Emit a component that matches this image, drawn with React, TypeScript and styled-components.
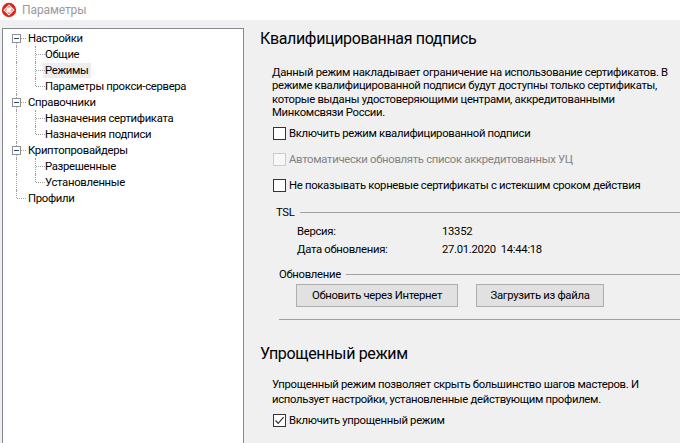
import React from "react";
import styled, { createGlobalStyle } from "styled-components";

const GlobalStyle = createGlobalStyle`
  html, body {
    margin: 0;
    padding: 0;
  }
  body {
    font-family: Roboto, "Liberation Sans", sans-serif;
    font-size: 11.3px;
    letter-spacing: -0.3px;
    color: #000;
    background: #f0f0f0;
  }
`;

const Window = styled.div`
  width: 680px;
  height: 443px;
  overflow: hidden;
  background: #f0f0f0;
  display: flex;
  flex-direction: column;
`;

const TitleBar = styled.div`
  height: 20px;
  flex: none;
  background: #fff;
  display: flex;
  align-items: center;
  gap: 5px;
  padding-left: 1px;
`;

const TitleText = styled.span`
  font-size: 12px;
  letter-spacing: -0.1px;
  color: #9a9a9a;
  line-height: 16px;
`;

const Body = styled.div`
  flex: 1;
  display: flex;
  padding: 8px 0 0 2px;
  min-height: 0;
`;

const TreePanel = styled.div`
  width: 242px;
  flex: none;
  box-sizing: border-box;
  background: #fff;
  border: 1px solid #828790;
  border-bottom: none;
  padding-top: 1px;
`;

const TreeRow = styled.div<{ $level: number }>`
  position: relative;
  height: 16px;
  display: flex;
  align-items: center;
  padding-left: ${(p) => (p.$level === 0 ? 23 : 40)}px;
  white-space: nowrap;
`;

const TreeLabel = styled.span<{ $selected?: boolean }>`
  padding: 0 2px;
  line-height: 15px;
  background: ${(p) => (p.$selected ? "#ededed" : "transparent")};
`;

const VGuide = styled.span<{ $x: number; $top: number; $height: number }>`
  position: absolute;
  left: ${(p) => p.$x}px;
  top: ${(p) => p.$top}px;
  height: ${(p) => p.$height}px;
  border-left: 1px dotted #a0a0a0;
`;

const HGuide = styled.span<{ $x: number; $width: number }>`
  position: absolute;
  left: ${(p) => p.$x}px;
  top: 8px;
  width: ${(p) => p.$width}px;
  border-top: 1px dotted #a0a0a0;
`;

const Expander = styled.span`
  position: absolute;
  left: 9px;
  top: 4px;
  width: 9px;
  height: 9px;
  box-sizing: border-box;
  border: 1px solid #919191;
  background: #fff;
  z-index: 1;
  &::after {
    content: "";
    position: absolute;
    left: 1px;
    top: 3px;
    width: 5px;
    height: 1px;
    background: #2d4b7a;
  }
`;

const Content = styled.div`
  flex: 1;
  padding: 0 0 0 16px;
  min-width: 0;
`;

const SectionTitle = styled.h2<{ $gap?: number }>`
  margin: ${(p) => p.$gap ?? 0}px 0 0;
  font-size: 16px;
  letter-spacing: -0.35px;
  font-weight: 400;
  line-height: 21px;
  white-space: nowrap;
`;

const Description = styled.p<{ $gap: number; $lh: number }>`
  margin: ${(p) => p.$gap}px 0 0 12px;
  line-height: ${(p) => p.$lh}px;
  white-space: nowrap;
`;

const Checks = styled.div<{ $gap: number }>`
  display: flex;
  flex-direction: column;
  gap: 8px;
  margin: ${(p) => p.$gap}px 0 0 13px;
`;

const CheckRow = styled.label<{ $disabled?: boolean }>`
  display: flex;
  align-items: center;
  gap: 3px;
  height: 18px;
  white-space: nowrap;
  color: ${(p) => (p.$disabled ? "#838383" : "#000")};
`;

const CheckBox = styled.span<{ $disabled?: boolean }>`
  width: 13px;
  height: 13px;
  flex: none;
  box-sizing: border-box;
  border: 1px solid ${(p) => (p.$disabled ? "#cccccc" : "#333")};
  background: ${(p) => (p.$disabled ? "#f7f7f7" : "#fff")};
  display: flex;
  align-items: center;
  justify-content: center;
`;

const GroupHeader = styled.div<{ $indent: number; $gap: number }>`
  display: flex;
  align-items: center;
  gap: 5px;
  height: 16px;
  margin: ${(p) => p.$gap}px 0 0 ${(p) => p.$indent}px;
  white-space: nowrap;
  &::after {
    content: "";
    flex: 1;
    border-top: 1px solid #a0a0a0;
  }
`;

const Separator = styled.div`
  margin: 12px 0 0 19px;
  border-top: 1px solid #a0a0a0;
`;

const InfoGrid = styled.div`
  display: grid;
  grid-template-columns: 145px auto;
  grid-auto-rows: 18px;
  align-items: center;
  margin: 2px 0 0 37px;
  white-space: pre;
`;

const Buttons = styled.div`
  display: flex;
  gap: 18px;
  margin: 2px 0 0 36px;
`;

const Button = styled.button<{ $width: number }>`
  width: ${(p) => p.$width}px;
  height: 23px;
  padding: 0;
  font: inherit;
  letter-spacing: inherit;
  color: #000;
  background: #e1e1e1;
  border: 1px solid #adadad;
  border-radius: 0;
`;

const Logo = () => (
  <svg width="16" height="16" viewBox="0 0 16 16">
    <circle cx="8" cy="8" r="7.2" fill="#d8291f" />
    <g fill="none" stroke="#fff" strokeWidth="1.1">
      <path d="M8 3.2 L12.8 8 L8 12.8 L3.2 8 Z" />
      <path d="M8 5.6 L10.4 8 L8 10.4 L5.6 8 Z" />
      <path d="M5.6 5.6 L10.4 10.4 M10.4 5.6 L5.6 10.4" />
    </g>
  </svg>
);

const Check = () => (
  <svg width="11" height="11" viewBox="0 0 11 11">
    <path d="M1.5 5.5 L4.2 8.3 L9.6 2.2" fill="none" stroke="#333" strokeWidth="1.2" />
  </svg>
);

type Node = { label: string; level: number; expander?: boolean; last?: boolean; first?: boolean; selected?: boolean };

const tree: Node[] = [
  { label: "Настройки", level: 0, expander: true, first: true },
  { label: "Общие", level: 1 },
  { label: "Режимы", level: 1, selected: true },
  { label: "Параметры прокси-сервера", level: 1, last: true },
  { label: "Справочники", level: 0, expander: true },
  { label: "Назначения сертификата", level: 1 },
  { label: "Назначения подписи", level: 1, last: true },
  { label: "Криптопровайдеры", level: 0, expander: true },
  { label: "Разрешенные", level: 1 },
  { label: "Установленные", level: 1, last: true },
  { label: "Профили", level: 0, last: true },
];

const TreeItem = ({ node }: { node: Node }) => {
  if (node.level === 0) {
    const top = node.first ? 8 : 0;
    const bottom = node.last ? 8 : 16;
    return (
      <TreeRow $level={0}>
        <VGuide $x={13} $top={top} $height={bottom - top} />
        {node.expander ? <Expander /> : null}
        <HGuide $x={node.expander ? 18 : 14} $width={node.expander ? 5 : 9} />
        <TreeLabel>{node.label}</TreeLabel>
      </TreeRow>
    );
  }
  return (
    <TreeRow $level={1}>
      <VGuide $x={13} $top={0} $height={16} />
      <VGuide $x={32} $top={0} $height={node.last ? 8 : 16} />
      <HGuide $x={33} $width={9} />
      <TreeLabel $selected={node.selected}>{node.label}</TreeLabel>
    </TreeRow>
  );
};

export default function App() {
  return (
    <>
      <GlobalStyle />
      <Window>
        <TitleBar>
          <Logo />
          <TitleText>Параметры</TitleText>
        </TitleBar>
        <Body>
          <TreePanel>
            {tree.map((node) => (
              <TreeItem key={node.label} node={node} />
            ))}
          </TreePanel>
          <Content>
            <SectionTitle>Квалифицированная подпись</SectionTitle>
            <Description $gap={17} $lh={13.3}>
              Данный режим накладывает ограничение на использование сертификатов. В
              <br />
              режиме квалифицированной подписи будут доступны только сертификаты,
              <br />
              которые выданы удостоверяющими центрами, аккредитованными
              <br />
              Минкомсвязи России.
            </Description>
            <Checks $gap={5}>
              <CheckRow>
                <CheckBox />
                Включить режим квалифицированной подписи
              </CheckRow>
              <CheckRow $disabled>
                <CheckBox $disabled />
                Автоматически обновлять список аккредитованных УЦ
              </CheckRow>
              <CheckRow>
                <CheckBox />
                Не показывать корневые сертификаты с истекшим сроком действия
              </CheckRow>
            </Checks>
            <GroupHeader $indent={16} $gap={10}>TSL</GroupHeader>
            <InfoGrid>
              <span>Версия:</span>
              <span>13352</span>
              <span>Дата обновления:</span>
              <span>27.01.2020  14:44:18</span>
            </InfoGrid>
            <GroupHeader $indent={19} $gap={8}>Обновление</GroupHeader>
            <Buttons>
              <Button $width={162}>Обновить через Интернет</Button>
              <Button $width={128}>Загрузить из файла</Button>
            </Buttons>
            <Separator />
            <SectionTitle $gap={23}>Упрощенный режим</SectionTitle>
            <Description $gap={13} $lh={15}>
              Упрощенный режим позволяет скрыть большинство шагов мастеров. И
              <br />
              использует настройки, установленные действующим профилем.
            </Description>
            <Checks $gap={4}>
              <CheckRow>
                <CheckBox>
                  <Check />
                </CheckBox>
                Включить упрощенный режим
              </CheckRow>
            </Checks>
          </Content>
        </Body>
      </Window>
    </>
  );
}
